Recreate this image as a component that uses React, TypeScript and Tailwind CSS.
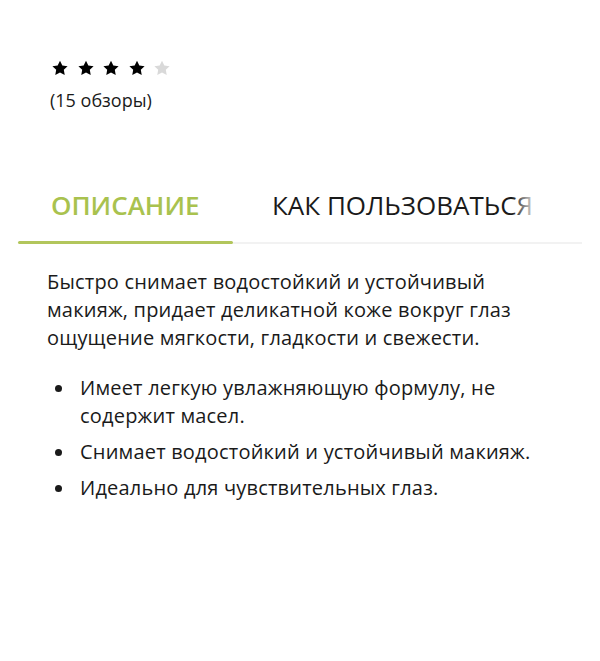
import React from "react";

const Star = ({ filled }: { filled: boolean }) => (
  <svg width="16" height="16" viewBox="0 0 24 23" className={filled ? "text-black" : "text-[#d9d9d9]"}>
    <path fill="currentColor" d="M12 0.5l3.5 7.2 7.9 1.1-5.7 5.5 1.4 7.8L12 18.4l-7.1 3.7 1.4-7.8L0.6 8.8l7.9-1.1z" />
  </svg>
);

export default function App() {
  const font = { fontFamily: "'Open Sans', Lato, sans-serif" };
  return (
    <div className="w-[600px] h-[661px] bg-white text-[#1a1a1a]" style={font}>
      <div className="pt-[60px] px-[52px]">
        <div className="flex gap-[9.5px]">
          <Star filled />
          <Star filled />
          <Star filled />
          <Star filled />
          <Star filled={false} />
        </div>
        <div className="mt-[13px] -ml-[2px] text-[18px] leading-[22px]">(15 обзоры)</div>
      </div>
      <div className="mt-[78px] mx-[18px] relative">
        <div className="flex text-[26px] leading-[32px] pb-[20px]">
          <div className="pl-[33px] w-[215px] text-[#a9c24e] font-semibold">ОПИСАНИЕ</div>
          <div className="pl-[39px] whitespace-nowrap">КАК ПОЛЬЗОВАТЬСЯ</div>
        </div>
        <div className="pointer-events-none absolute right-[48px] top-0 h-[32px] w-[22px] bg-gradient-to-r from-transparent to-white/85" />
        <div className="flex items-center">
          <div className="w-[215px] h-[3px] bg-[#b2c65c] rounded-full" />
          <div className="flex-1 h-[2px] bg-[#f2f2f2]" />
        </div>
      </div>
      <div className="px-[47px] mt-[24px] text-[20px] tracking-[0.2px] leading-[28px]">
        <p>Быстро снимает водостойкий и устойчивый макияж, придает деликатной коже вокруг глаз ощущение мягкости, гладкости и свежести.</p>
        <ul className="mt-[22px] flex flex-col gap-[8px]">
          {[
            "Имеет легкую увлажняющую формулу, не содержит масел.",
            "Снимает водостойкий и устойчивый макияж.",
            "Идеально для чувствительных глаз.",
          ].map((t) => (
            <li key={t} className="flex">
              <span className="w-[33px] shrink-0 flex items-center pl-[8px] h-[28px]">
                <span className="w-[7px] h-[7px] rounded-full bg-[#1a1a1a]" />
              </span>
              <span>{t}</span>
            </li>
          ))}
        </ul>
      </div>
    </div>
  );
}
